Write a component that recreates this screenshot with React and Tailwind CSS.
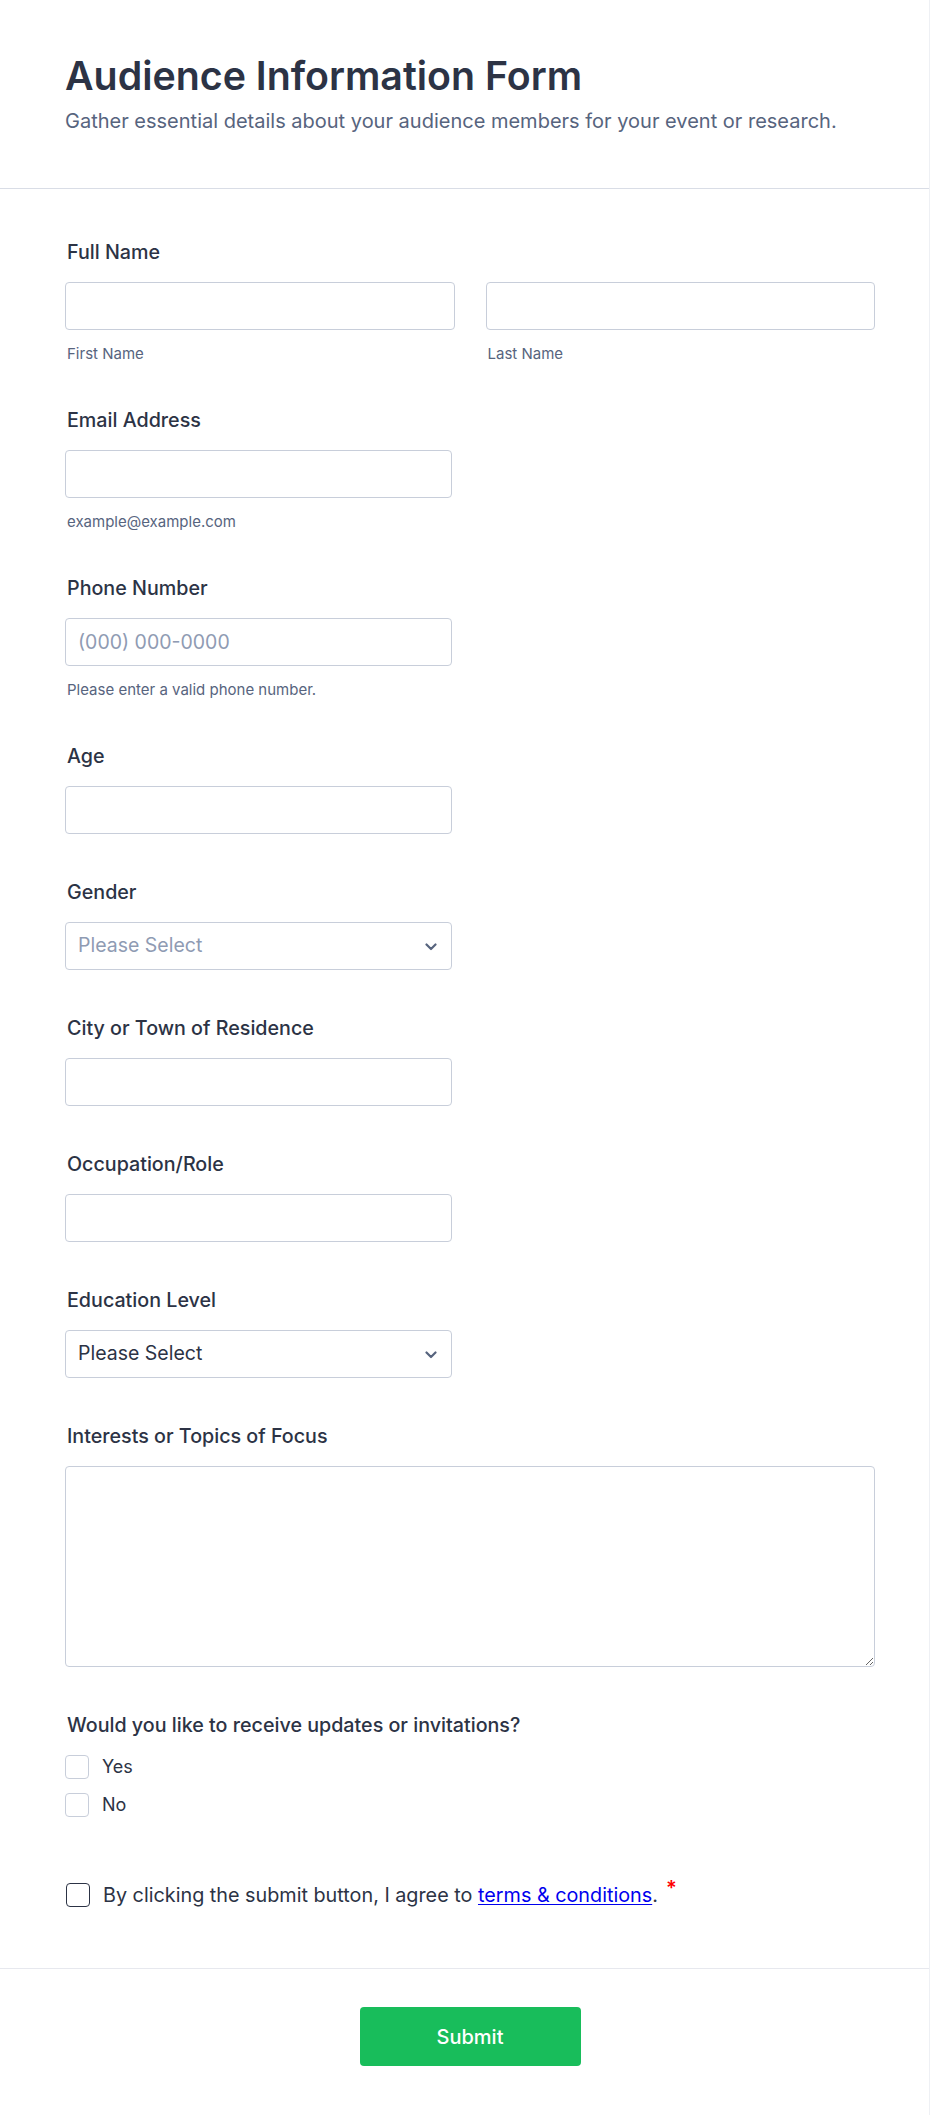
import React from "react";

function Label({ children }) {
  return (
    <div className="text-[19.7px] leading-[24px] font-medium text-[#2c3345] pl-[2px]">
      {children}
    </div>
  );
}

function Sub({ children }) {
  return (
    <div className="mt-[16px] text-[15px] leading-[16px] text-[#57647e] pl-[2px]">
      {children}
    </div>
  );
}

function TextInput({ placeholder, className = "" }) {
  return (
    <input
      type="text"
      placeholder={placeholder}
      className={
        "h-12 w-full rounded-[4px] border border-[#c8ceda] bg-white px-3 text-[19.5px] text-[#2c3345] placeholder:text-[#8f9bb3] outline-none " +
        className
      }
    />
  );
}

function Chevron() {
  return (
    <svg width="12" height="8" viewBox="0 0 12 8" fill="none" className="absolute right-[14px] top-[20px]">
      <path d="M1.5 1.5L6 6L10.5 1.5" stroke="#57647e" strokeWidth="2.2" strokeLinecap="round" strokeLinejoin="round" />
    </svg>
  );
}

function Select({ muted }) {
  return (
    <div className="relative mt-[18px] h-12 w-[387px] rounded-[4px] border border-[#c8ceda] bg-white">
      <div
        className={
          "flex h-full items-center pl-3 text-[19.5px] " +
          (muted ? "text-[#8f9bb3]" : "text-[#2c3345]")
        }
      >
        Please Select
      </div>
      <Chevron />
    </div>
  );
}

function Box({ dark }) {
  return (
    <span
      className={
        "inline-block h-6 w-6 shrink-0 rounded-[4px] bg-white " +
        (dark ? "border-[1.5px] border-[#2c3345]" : "border border-[#c8ceda]")
      }
    />
  );
}

export default function App() {
  return (
    <div
      className="min-h-[2115px] w-full bg-white border-r border-[#eef0f4]"
      style={{ fontFamily: "Inter, 'Noto Sans', sans-serif" }}
    >
      <header className="px-[65px] pt-[52px] pb-[53px] border-b border-[#d9dde6]">
        <h1 className="text-[39.3px] leading-[48px] font-semibold text-[#2c3345]">
          Audience Information Form
        </h1>
        <p className="mt-[7px] text-[20px] leading-[28px] text-[#57647e]">
          Gather essential details about your audience members for your event or research.
        </p>
      </header>

      <main className="px-[65px] pt-[51px] pb-[61px] flex flex-col gap-[46px]">
        <div>
          <Label>Full Name</Label>
          <div className="mt-[18px] grid grid-cols-2 gap-[31px] w-[810px]">
            <div>
              <TextInput />
              <Sub>First Name</Sub>
            </div>
            <div>
              <TextInput />
              <Sub>Last Name</Sub>
            </div>
          </div>
        </div>

        <div>
          <Label>Email Address</Label>
          <div className="mt-[18px] w-[387px]">
            <TextInput />
          </div>
          <Sub>example@example.com</Sub>
        </div>

        <div>
          <Label>Phone Number</Label>
          <div className="mt-[18px] w-[387px]">
            <TextInput placeholder="(000) 000-0000" />
          </div>
          <Sub>Please enter a valid phone number.</Sub>
        </div>

        <div>
          <Label>Age</Label>
          <div className="mt-[18px] w-[387px]">
            <TextInput />
          </div>
        </div>

        <div>
          <Label>Gender</Label>
          <Select muted />
        </div>

        <div>
          <Label>City or Town of Residence</Label>
          <div className="mt-[18px] w-[387px]">
            <TextInput />
          </div>
        </div>

        <div>
          <Label>Occupation/Role</Label>
          <div className="mt-[18px] w-[387px]">
            <TextInput />
          </div>
        </div>

        <div>
          <Label>Education Level</Label>
          <Select />
        </div>

        <div>
          <Label>Interests or Topics of Focus</Label>
          <textarea className="mt-[18px] block h-[201px] w-[810px] rounded-[4px] border border-[#c8ceda] bg-white p-3 text-[18px] outline-none" />
        </div>

        <div>
          <Label>Would you like to receive updates or invitations?</Label>
          <div className="mt-[18px] flex flex-col gap-[14px]">
            <label className="flex items-center gap-[13px] text-[18px] leading-6 text-[#2c3345]">
              <Box />
              Yes
            </label>
            <label className="flex items-center gap-[13px] text-[18px] leading-6 text-[#2c3345]">
              <Box />
              No
            </label>
          </div>
        </div>

        <div className="mt-[20px] flex items-center gap-[13px] pl-[1px] text-[19.8px] leading-6 text-[#2c3345]">
          <Box dark />
          <span>
            By clicking the submit button, I agree to{" "}
            <a href="#" className="text-[#0000ee] underline underline-offset-2">
              terms &amp; conditions
            </a>
            .
            <span className="relative -top-[7px] ml-[8px] text-[20px] text-[#ff0000] font-semibold">*</span>
          </span>
        </div>
      </main>

      <footer className="border-t border-[#e6e8ee] px-[65px] pt-[38px] pb-[50px]">
        <div className="flex w-[810px] justify-center">
          <button className="h-[59px] w-[221px] rounded-[4px] bg-[#18bd5b] text-[20px] font-medium text-white">
            Submit
          </button>
        </div>
      </footer>
    </div>
  );
}
